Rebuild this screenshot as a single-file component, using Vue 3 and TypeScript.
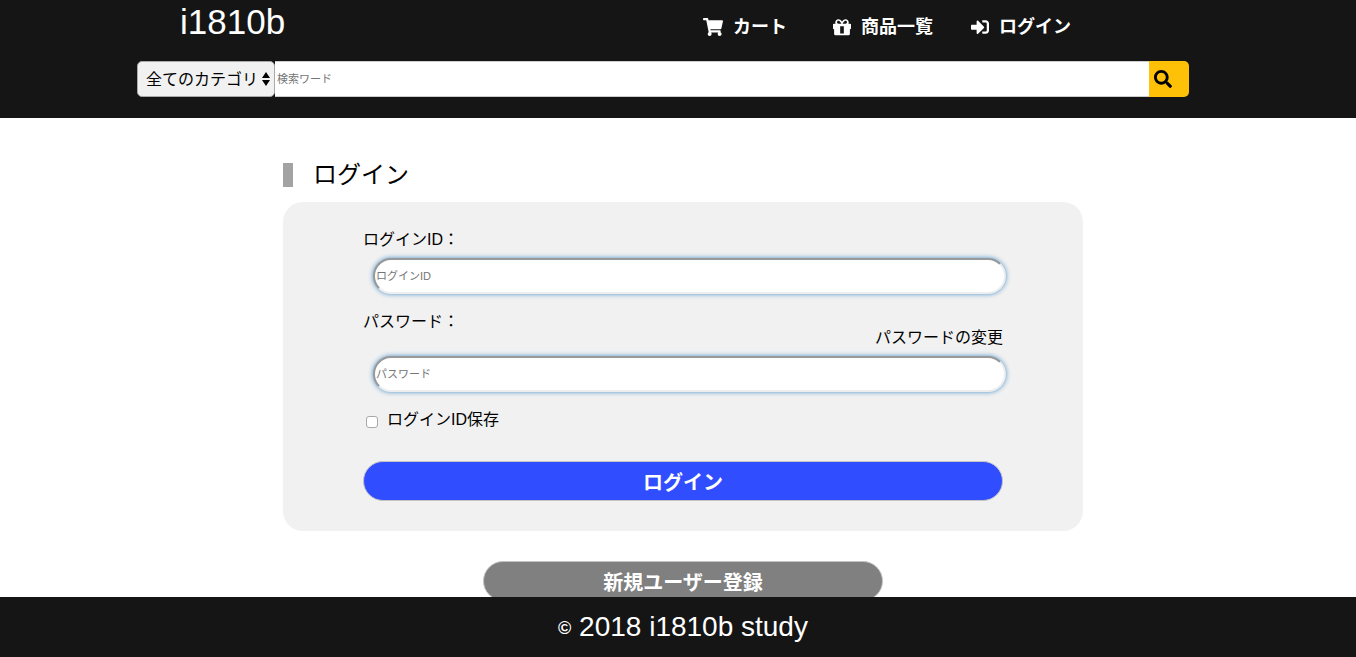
<script setup lang="ts">
import { ref } from 'vue'

interface NavItem {
  label: string
  viewBox: string
  wide: boolean
  path: string
}

const navItems: NavItem[] = [
  {
    label: 'カート',
    viewBox: '0 0 576 512',
    wide: true,
    path: 'M528.12 301.319l47.273-208C578.806 78.301 567.391 64 551.99 64H159.208l-9.166-44.81C147.758 8.021 137.93 0 126.529 0H24C10.745 0 0 10.745 0 24v16c0 13.255 10.745 24 24 24h69.883l70.248 343.435C147.325 417.1 136 435.222 136 456c0 30.928 25.072 56 56 56s56-25.072 56-56c0-15.674-6.447-29.835-16.824-40h209.647C430.447 426.165 424 440.326 424 456c0 30.928 25.072 56 56 56s56-25.072 56-56c0-22.172-12.888-41.332-31.579-50.405l5.517-24.276c3.413-15.018-8.002-29.319-23.403-29.319H218.117l-6.545-32h293.145c11.206 0 20.92-7.754 23.403-18.681z',
  },
  {
    label: '商品一覧',
    viewBox: '0 0 512 512',
    wide: false,
    path: 'M488 160h-50.100c6.200-12.100 10.100-25.500 10.100-40 0-48.500-39.500-88-88-88-41.600 0-68.500 21.300-104 68.300C220.500 53.300 193.600 32 152 32c-48.500 0-88 39.500-88 88 0 14.500 3.800 27.900 10.100 40H24c-13.300 0-24 10.700-24 24v112c0 13.300 10.700 24 24 24h8v136c0 17.700 14.300 32 32 32h384c17.700 0 32-14.300 32-32V320h8c13.300 0 24-10.700 24-24V184c0-13.300-10.700-24-24-24zM153.900 160c-22.100 0-40-17.900-40-40s17.900-40 40-40c19.900 0 34.600 3.300 86.100 80h-86.100zM358.100 160H272c51.400-76.500 65.700-80 86.100-80 22.100 0 40 17.900 40 40s-17.900 40-40 40zM204 232h104v212H204z',
  },
  {
    label: 'ログイン',
    viewBox: '0 0 512 512',
    wide: false,
    path: 'M416 448h-84c-6.600 0-12-5.400-12-12v-40c0-6.600 5.400-12 12-12h84c17.700 0 32-14.300 32-32V160c0-17.700-14.300-32-32-32h-84c-6.600 0-12-5.400-12-12V76c0-6.600 5.400-12 12-12h84c53 0 96 43 96 96v192c0 53-43 96-96 96zm-47-201L201 79c-15-15-41-4.500-41 17v96H24c-13.300 0-24 10.700-24 24v96c0 13.300 10.700 24 24 24h136v96c0 21.500 26 32 41 17l168-168c9.300-9.400 9.300-24.600 0-34z',
  },
]

const category = ref('all')
const keyword = ref('')
const loginId = ref('')
const password = ref('')
const remember = ref(false)
</script>

<template>
  <div class="page">
    <header class="header">
      <div class="top">
        <a class="logo" href="#">i1810b</a>
        <nav class="nav">
          <a v-for="item in navItems" :key="item.label" class="nav-link" href="#">
            <svg :class="['nav-icon', { wide: item.wide }]" :viewBox="item.viewBox" aria-hidden="true">
              <path :d="item.path" fill-rule="evenodd" />
            </svg>
            <span>{{ item.label }}</span>
          </a>
        </nav>
      </div>
      <form class="search" @submit.prevent>
        <div class="category">
          <select v-model="category" aria-label="カテゴリ">
            <option value="all">全てのカテゴリ</option>
          </select>
          <svg class="arrows" viewBox="0 0 8 16" aria-hidden="true">
            <path d="M4 1L8 7H0zM4 15L0 9H8z" />
          </svg>
        </div>
        <input v-model="keyword" class="keyword" type="text" placeholder="検索ワード" aria-label="検索ワード" />
        <button class="search-button" type="submit" aria-label="検索">
          <svg viewBox="0 0 512 512" aria-hidden="true">
            <path d="M505 442.700L405.300 343c-4.500-4.500-10.600-7-17-7H372c27.600-35.300 44-79.700 44-128C416 93.100 322.900 0 208 0S0 93.100 0 208s93.100 208 208 208c48.300 0 92.700-16.400 128-44v16.300c0 6.400 2.500 12.500 7 17l99.700 99.700c9.400 9.400 24.600 9.400 33.900 0l28.300-28.300c9.400-9.400 9.400-24.600.1-34zM208 336c-70.700 0-128-57.200-128-128 0-70.700 57.200-128 128-128 70.700 0 128 57.200 128 128 0 70.700-57.200 128-128 128z" />
          </svg>
        </button>
      </form>
    </header>

    <main class="main">
      <h1 class="title">ログイン</h1>
      <form class="panel" @submit.prevent>
        <label class="label" for="login-id">ログインID：</label>
        <input id="login-id" v-model="loginId" class="field" type="text" placeholder="ログインID" />
        <label class="label second" for="password">パスワード：</label>
        <a class="change" href="#">パスワードの変更</a>
        <input id="password" v-model="password" class="field" type="password" placeholder="パスワード" />
        <div class="remember">
          <input id="remember" v-model="remember" type="checkbox" />
          <label for="remember">ログインID保存</label>
        </div>
        <button class="pill" type="submit">ログイン</button>
      </form>
      <button class="pill register" type="button">新規ユーザー登録</button>
    </main>

    <footer class="footer"><small class="mark">©</small> 2018 i1810b study</footer>
  </div>
</template>

<style>
body {
  margin: 0;
  background: #fff;
}
</style>

<style scoped>
.page,
.page input,
.page select,
.page button {
  font-family: 'Liberation Sans', 'Noto Sans CJK JP', sans-serif;
}

.page {
  color: #000;
  font-size: 16px;
  line-height: 24px;
  padding-bottom: 60px;
}

.page * {
  box-sizing: border-box;
}

a {
  color: inherit;
  text-decoration: none;
}

.header {
  background: #151515;
  color: #fff;
  padding: 0 167px 21px 137px;
}

.top {
  display: flex;
  justify-content: space-between;
  height: 61px;
  padding: 0 99px 0 43px;
}

.logo {
  font-size: 35px;
  line-height: 44px;
}

.nav {
  display: grid;
  grid-template-columns: repeat(3, 138px);
  height: 54px;
}

.nav-link {
  display: flex;
  align-items: center;
  justify-content: center;
  gap: 10px;
  font-size: 18px;
  font-weight: 700;
}

.nav-icon {
  width: 18px;
  height: 18px;
  fill: #fff;
}

.nav-icon.wide {
  width: 20px;
}

.search {
  display: flex;
  height: 36px;
}

.category {
  position: relative;
  width: 138px;
}

.category select {
  appearance: none;
  width: 100%;
  height: 100%;
  padding: 0 8px;
  border: 1px solid #a9a9a9;
  border-radius: 5px;
  background: #f1f1f1;
  color: #000;
  font-size: 16px;
}

.arrows {
  position: absolute;
  top: 10px;
  right: 5px;
  width: 8px;
  height: 16px;
  pointer-events: none;
}

.keyword {
  flex: 1;
  min-width: 0;
  padding: 0 2px;
  border: 1px solid #ccc;
  border-width: 1px 0;
  background: #fff;
  font-size: 11px;
}

input::placeholder {
  color: #757575;
  opacity: 1;
}

.search-button {
  display: flex;
  align-items: center;
  width: 40px;
  padding: 0 5px;
  border: 0;
  border-radius: 0 5px 5px 0;
  background: #ffc107;
}

.search-button svg {
  width: 18px;
  height: 18px;
}

.main {
  display: flex;
  flex-direction: column;
  align-items: center;
  padding: 45px 0 0 10px;
}

.title,
.panel {
  width: 100%;
  max-width: 800px;
}

.title {
  margin: 0 0 15px;
  padding-left: 20px;
  border-left: 10px solid #a3a3a3;
  font-size: 24px;
  font-weight: 400;
  line-height: 24px;
}

.panel {
  display: flex;
  flex-direction: column;
  margin-bottom: 30px;
  padding: 26px 80px 30px;
  border-radius: 20px;
  background: #f1f1f1;
}

.label {
  height: 30px;
}

.second {
  height: 16px;
  margin-top: 16px;
}

.change {
  align-self: flex-end;
  height: 30px;
}

.field {
  height: 36px;
  margin: 0 -3px 0 10px;
  padding: 0 1px;
  border: 2px solid;
  border-color: #999 #eee #eee #999;
  border-radius: 18px;
  background: #fff;
  box-shadow: 0 0 5px #4a90c8;
  font-size: 11px;
}

.remember {
  display: flex;
  align-items: center;
  gap: 9px;
  margin: 16px 0 29px;
}

.remember input {
  appearance: none;
  width: 12px;
  height: 12px;
  margin: 4px 0 0 3px;
  border: 1px solid #a9a9a9;
  border-radius: 3px;
  background: #fff;
}

.remember input:checked {
  background: #304dff;
}

.pill {
  height: 40px;
  padding: 0;
  border: 1px solid #c4c4c4;
  border-radius: 20px;
  background: #304dff;
  color: #fff;
  font-size: 20px;
  font-weight: 700;
}

.register {
  width: 400px;
  background: #808080;
}

.footer {
  position: fixed;
  right: 0;
  bottom: 0;
  left: 0;
  height: 60px;
  padding-left: 10px;
  background: #151515;
  color: #fff;
  font-size: 28px;
  line-height: 60px;
  text-align: center;
}

.mark {
  font-size: 18px;
  font-weight: 700;
  vertical-align: 2px;
}
</style>
